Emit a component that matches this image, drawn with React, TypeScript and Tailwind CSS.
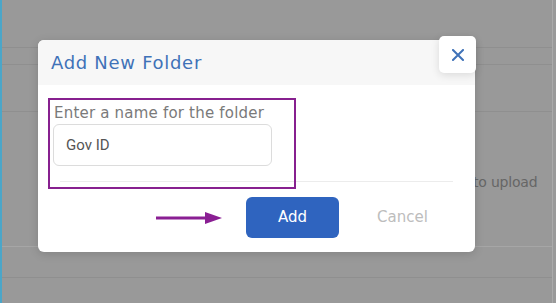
export default function App() {
  return (
    <div className="relative w-[556px] h-[303px] overflow-hidden bg-[#999999] font-[family-name:'DejaVu_Sans',sans-serif]">
      {/* background page */}
      <div className="flex h-full">
        <div className="w-[2px] bg-[#4ba6c9]" />
        <div className="flex-1 flex flex-col">
          <div className="h-[48px] border-b border-[#8f8f8f]" />
          <div className="h-[17px] border-b border-[#8f8f8f]" />
          <div className="h-[47px] border-b border-[#8f8f8f]" />
          <div className="h-[135px] border-b border-[#a6a6a6] pl-[471px] pt-[58px]">
            <span className="text-[14px] leading-[20px] text-[#666666] tracking-[-0.2px]">to upload</span>
          </div>
          <div className="h-[31px] border-b border-[#8f8f8f]" />
          <div className="flex-1" />
        </div>
        <div className="w-[1px] bg-[#aaaaaa]" />
        <div className="w-[3px]" />
      </div>

      {/* dialog */}
      <div className="absolute left-[38px] top-[40px] w-[437px] h-[212px] bg-white rounded-[6px] shadow-[0_2px_10px_rgba(0,0,0,0.15)] flex flex-col">
        <div className="h-[45px] bg-[#f7f7f7] rounded-t-[6px] pl-[13px] pt-[11px]">
          <div className="text-[18px] leading-[24px] tracking-[0.7px] text-[#3f72b8]">Add New Folder</div>
        </div>
        <div className="pt-[18px] pl-[15px] flex flex-col">
          <div className="ml-[1px] text-[15px] leading-[20px] tracking-[0.2px] text-[#7a7a7a]">Enter a name for the folder</div>
          <div className="mt-[1px] w-[219px] h-[42px] border border-[#dcdcdc] rounded-[6px] px-[12px] flex items-center text-[15px] text-[#555555] font-[family-name:Roboto,sans-serif]">
            Gov ID
          </div>
        </div>
        <div className="mt-[15px] mx-[22px] h-[1px] bg-[#ececec]" />
        <div className="mt-[15px] flex items-center pl-[208px]">
          <div className="w-[93px] h-[41px] bg-[#2f64bf] rounded-[6px] flex items-center justify-center text-[15px] text-white">
            Add
          </div>
          <div className="ml-[38px] text-[15px] text-[#bdbdbd]">Cancel</div>
        </div>
      </div>

      {/* close button */}
      <div className="absolute left-[439px] top-[36px] w-[37px] h-[37px] bg-white rounded-[5px] shadow-[0_2px_8px_rgba(0,0,0,0.12)] flex items-center justify-center">
        <svg width="12" height="12" viewBox="0 0 12 12">
          <path d="M1 1L11 11M11 1L1 11" stroke="#3f72b8" strokeWidth="2" strokeLinecap="square" />
        </svg>
      </div>

      {/* annotations */}
      <div className="absolute left-[48px] top-[98px] w-[248px] h-[91px] border-2 border-[#87208f]" />
      <svg className="absolute left-[156px] top-[212px]" width="66" height="12" viewBox="0 0 66 12">
        <path d="M0 6H52" stroke="#8a1f93" strokeWidth="3" />
        <path d="M49 0L66 6L49 12Z" fill="#8a1f93" />
      </svg>
    </div>
  );
}
